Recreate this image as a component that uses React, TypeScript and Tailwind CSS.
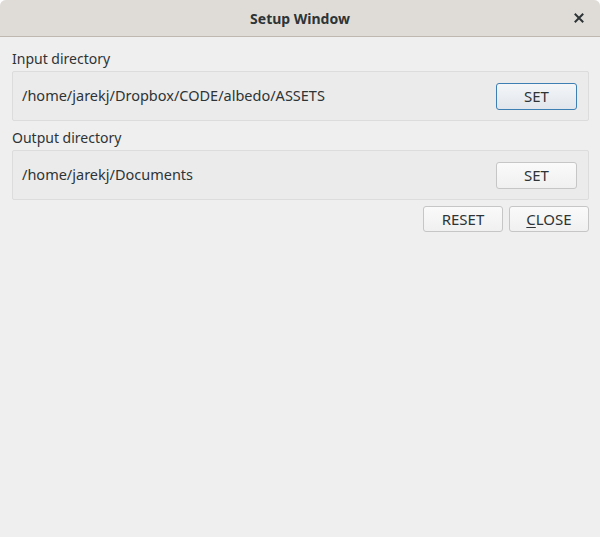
import React from 'react';

const font = { fontFamily: '"Noto Sans", "DejaVu Sans", sans-serif' };

const plainBtn =
  'h-[26px] w-[80px] rounded-[3px] border border-[#c6c6c6] bg-gradient-to-b from-[#fafafa] to-[#f0f0f0] text-[15px] text-[#2e3436]';

function DirRow({ label, path, focused }: { label: string; path: string; focused?: boolean }) {
  return (
    <div className="flex flex-col">
      <div className="h-[23px] pt-[1px] text-[14px] leading-[20px] text-[#2e3436]">{label}</div>
      <div className="flex h-[50px] items-center justify-between rounded-[2px] border border-[#dcdcdc] bg-[#ebebeb] pl-[9px] pr-[11px]">
        <span className="text-[14.5px] text-[#2e3436]">{path}</span>
        <button
          className={
            focused
              ? 'h-[27px] w-[81px] rounded-[3px] border border-[#3d7eb3] bg-gradient-to-b from-[#f4f6f8] to-[#e1e6ec] text-[15px] text-[#2e3436]'
              : 'h-[27px] w-[81px] rounded-[3px] border border-[#c6c6c6] bg-gradient-to-b from-[#fafafa] to-[#f0f0f0] text-[15px] text-[#2e3436]'
          }
        >
          SET
        </button>
      </div>
    </div>
  );
}

export default function App() {
  return (
    <div className="h-[537px] w-[600px] overflow-hidden bg-white" style={font}>
      <div className="flex h-full flex-col rounded-t-[6px] bg-[#efefef]">
        <div className="relative flex h-[37px] shrink-0 items-center justify-center rounded-t-[6px] border-b border-[#bfb8b1] bg-[#dfdcd8]">
          <span className="text-[14px] font-bold text-[#2e3436]">Setup Window</span>
          <svg className="absolute right-[16px] top-[13px]" width="10" height="10" viewBox="0 0 10 10">
            <path d="M1.5 1.5 L8.5 8.5 M8.5 1.5 L1.5 8.5" stroke="#2e3436" strokeWidth="2" strokeLinecap="square" />
          </svg>
        </div>
        <div className="flex flex-col pl-[12px] pr-[11px] pt-[11px]">
          <DirRow label="Input directory" path="/home/jarekj/Dropbox/CODE/albedo/ASSETS" focused />
          <div className="h-[6px]" />
          <DirRow label="Output directory" path="/home/jarekj/Documents" />
          <div className="mt-[6px] flex justify-end gap-[6px]">
            <button className={plainBtn}>RESET</button>
            <button className={plainBtn}>
              <span className="underline underline-offset-2">C</span>LOSE
            </button>
          </div>
        </div>
      </div>
    </div>
  );
}
